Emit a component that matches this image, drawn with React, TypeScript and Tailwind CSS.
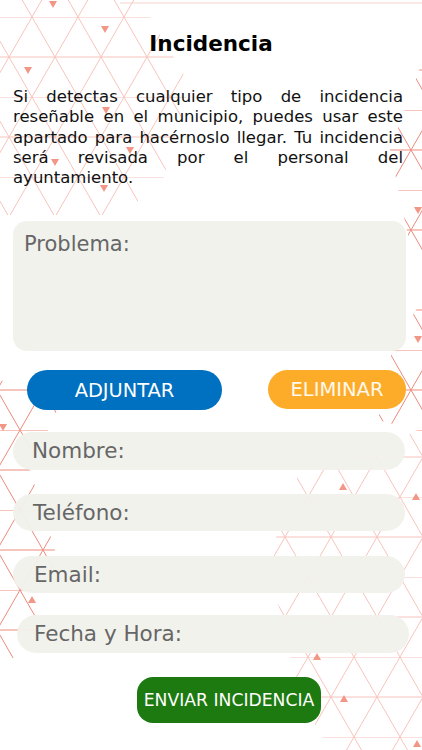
const fields = [
  { label: 'Nombre:', cls: 'mt-[22px] ml-[13px] mr-[17px] h-[38px] pl-[19px]' },
  { label: 'Teléfono:', cls: 'mt-[24px] ml-[13px] mr-[17px] h-[37px] pl-[20px]' },
  { label: 'Email:', cls: 'mt-[25px] ml-[13px] mr-[17px] h-[37px] pl-[21px]' },
  { label: 'Fecha y Hora:', cls: 'mt-[22px] ml-[17px] mr-[13px] h-[38px] pl-[17px]' },
];

const markers = [
  { x: 53, y: 4, down: true },
  { x: 105, y: 29, down: true },
  { x: 28, y: 70, down: true },
  { x: 106, y: 110, down: true },
  { x: 55, y: 162, down: true },
  { x: 130, y: 150, down: true },
  { x: 104, y: 188, down: true },
  { x: 418, y: 210, down: true },
  { x: 418, y: 339, down: true },
  { x: 3, y: 427, down: true },
  { x: 343, y: 487, down: false },
  { x: 416, y: 497, down: false },
  { x: 32, y: 600, down: false },
  { x: 317, y: 657, down: false },
  { x: 344, y: 699, down: false },
  { x: 417, y: 744, down: false },
];

const Backdrop = () => (
  <svg
    className="absolute inset-0 pointer-events-none"
    width="422"
    height="750"
    viewBox="0 0 422 750"
  >
    <defs>
      <pattern id="tri" x="32" y="17" width="46" height="80" patternUnits="userSpaceOnUse">
        <path d="M0 0H46M0 40H46M0 0L46 80M46 0L0 80" stroke="#f7c4bc" strokeWidth="1" fill="none" />
      </pattern>
      <pattern id="triDark" x="20" y="30" width="46" height="80" patternUnits="userSpaceOnUse">
        <path d="M0 0H46M0 40H46M0 0L46 80M46 0L0 80" stroke="#ec8a7b" strokeWidth="1" fill="none" />
      </pattern>
    </defs>
    {/* top left lattice */}
    <polygon points="0,0 140,0 190,85 160,190 110,215 0,215" fill="url(#tri)" />
    <line x1="120" y1="3" x2="422" y2="3" stroke="#f6d2cc" />
    {/* right side */}
    <polygon points="422,62 390,150 410,245 422,262" fill="url(#triDark)" />
    <polygon points="422,300 392,350 378,420 422,432" fill="url(#triDark)" />
    {/* bottom right */}
    <polygon points="422,430 300,470 268,560 300,700 330,750 422,750" fill="url(#tri)" />
    {/* left middle */}
    <polygon points="0,380 62,400 30,470 58,560 28,650 0,665" fill="url(#triDark)" />
    {markers.map((m, i) => (
      <polygon
        key={i}
        points={
          m.down
            ? `${m.x - 4},${m.y - 3} ${m.x + 4},${m.y - 3} ${m.x},${m.y + 4}`
            : `${m.x - 4},${m.y + 3} ${m.x + 4},${m.y + 3} ${m.x},${m.y - 4}`
        }
        fill="#f29686"
      />
    ))}
  </svg>
);

const App = () => {
  return (
    <div className="relative w-full min-h-screen bg-white overflow-hidden font-['DejaVu_Sans',sans-serif]">
      <Backdrop />
      <div className="relative flex flex-col">
        <h1 className="pt-[32px] text-center text-[21.5px] leading-[24px] font-bold text-black">
          Incidencia
        </h1>
        <p className="ml-[13px] mr-[19px] mt-[31px] text-[16.5px] leading-[20.3px] text-justify text-[#111]">
          Si detectas cualquier tipo de incidencia reseñable en el municipio, puedes usar este
          apartado para hacérnoslo llegar. Tu incidencia será revisada por el personal del
          ayuntamiento.
        </p>
        <div className="ml-[13px] mr-[16px] mt-[33px] h-[130px] rounded-[14px] bg-[#f1f1ec]/95 px-[11px] pt-[10px] text-[21px] leading-[26px] text-[#666]">
          Problema:
        </div>
        <div className="mt-[19px] flex items-start justify-between pl-[27px] pr-[16px]">
          <button className="h-[40px] w-[195px] rounded-full bg-[#0070c0] text-[19.4px] text-white">
            ADJUNTAR
          </button>
          <button className="h-[39px] w-[138px] rounded-full bg-[#fdac2a] text-[19.5px] text-[#fff8ec]">
            ELIMINAR
          </button>
        </div>
        {fields.map((f) => (
          <div
            key={f.label}
            className={`${f.cls} flex items-center rounded-full bg-[#f1f1ec]/95 text-[21.5px] text-[#666]`}
          >
            {f.label}
          </div>
        ))}
        <div className="mt-[24px] flex justify-center pl-[36px]">
          <button className="h-[46px] w-[184px] rounded-[16px] bg-[#1d7a10] text-[17.2px] text-white">
            ENVIAR INCIDENCIA
          </button>
        </div>
      </div>
    </div>
  );
};

export default App;
